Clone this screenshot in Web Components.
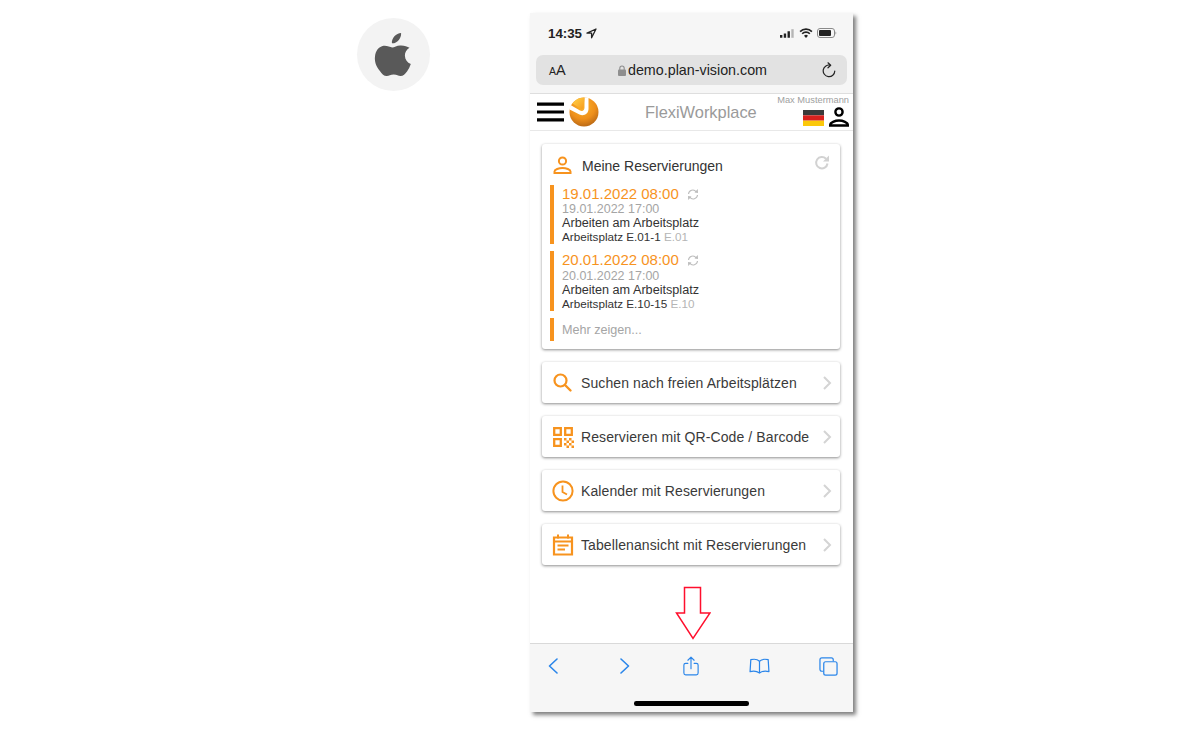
<!DOCTYPE html>
<html lang="de">
<head>
<meta charset="utf-8">
<title>FlexiWorkplace</title>
<style>
    html, body { margin: 0; height: 100%; background: #fff; }
    body {
        font-family: "Liberation Sans", Arial, sans-serif;
        display: flex;
        align-items: flex-start;
        padding: 13px 0 0 357px;
        box-sizing: border-box;
        overflow: hidden;
    }
</style>
</head>
<body>
<os-badge></os-badge>
<phone-frame>
    <safari-top slot="top"></safari-top>
    <app-header slot="top"></app-header>
    <reservation-card>
        <reservation-item from="19.01.2022 08:00" to="19.01.2022 17:00" place="Arbeitsplatz E.01-1" room="E.01"></reservation-item>
        <reservation-item from="20.01.2022 08:00" to="20.01.2022 17:00" place="Arbeitsplatz E.10-15" room="E.10"></reservation-item>
    </reservation-card>
    <menu-card icon="search">Suchen nach freien Arbeitsplätzen</menu-card>
    <menu-card icon="qr">Reservieren mit QR-Code / Barcode</menu-card>
    <menu-card icon="clock">Kalender mit Reservierungen</menu-card>
    <menu-card icon="table">Tabellenansicht mit Reservierungen</menu-card>
    <safari-bottom slot="bottom"></safari-bottom>
</phone-frame>

<script>
class OsBadge extends HTMLElement {
    constructor() {
        super();
        this.attachShadow({mode: 'open'});
        this.shadowRoot.innerHTML = `
            <style>
                :host {
                    display: flex;
                    flex: none;
                    width: 73px;
                    height: 73px;
                    margin: 5px 100px 0 0;
                    border-radius: 50%;
                    background: #f3f3f3;
                    align-items: center;
                    justify-content: center;
                }
                svg { width: 38px; height: 45px; margin-top: -1px; margin-left: -2px; }
            </style>
            <svg viewBox="0 0 37 45"><path fill="#595959" d="M26.600 1c.2 3-.9 5.400-2.500 7.200-1.700 2-4.200 3.300-6.700 3.100-.3-2.800 1-5.400 2.500-7.100C21.600 2.400 24.300 1.100 26.600 1zM35 15.800c-3 1.900-4.700 4.500-4.600 7.900.1 3.900 2.400 6.700 5.900 8.300-.9 2.700-2.200 5.200-3.800 7.400-1.900 2.600-3.800 4.700-6.400 4.700-2.500 0-3.500-1.500-6.900-1.500-3.300 0-4.600 1.500-6.900 1.500-2.700.1-4.900-2.400-6.900-5.200C1.600 34.700-.2 29.300.5 24.200c.6-4.600 3-8.700 7.500-10.100 3.900-1.200 7.100 1.300 9.700 1.300 2.400 0 5.100-2.400 9-1.900 3.300.2 6.300 1 8.300 2.300z"/></svg>
        `;
    }
}

class PhoneFrame extends HTMLElement {
    constructor() {
        super();
        this.attachShadow({mode: 'open'});
        this.shadowRoot.innerHTML = `
            <style>
                :host {
                    display: flex;
                    flex-direction: column;
                    flex: none;
                    width: 323px;
                    height: 699px;
                    background: #fff;
                    position: relative;
                    box-shadow: 3px 3px 4px rgba(0,0,0,.5);
                }
                main {
                    flex: 1;
                    display: flex;
                    flex-direction: column;
                    gap: 13px;
                    padding: 13px 13px 0 12px;
                    min-height: 0;
                }
                svg {
                    position: absolute;
                    left: 145px;
                    top: 573px;
                    width: 36px;
                    height: 54px;
                }
            </style>
            <slot name="top"></slot>
            <main><slot></slot></main>
            <slot name="bottom"></slot>
            <svg viewBox="0 0 36 54"><path fill="#fff" stroke="#ff0f2d" stroke-width="1.500" d="M9.500 1.500h16V27h9.500L18 52.500 1.500 27h8z"/></svg>
        `;
    }
}

class SafariTop extends HTMLElement {
    constructor() {
        super();
        this.attachShadow({mode: 'open'});
        this.shadowRoot.innerHTML = `
            <style>
                :host {
                    display: block;
                    height: 80px;
                    background: #f6f6f6;
                    border-bottom: 1px solid #dedede;
                }
                .status {
                    display: flex;
                    align-items: center;
                    height: 28px;
                    padding: 6px 16px 0 18px;
                    font-size: 13.300px;
                    font-weight: 700;
                    color: #222;
                    gap: 4px;
                }
                .status .icons { margin-left: auto; display: flex; align-items: center; gap: 5px; }
                .url {
                    display: flex;
                    align-items: center;
                    height: 30px;
                    margin: 8px 6px 0;
                    padding: 0 12px;
                    border-radius: 7px;
                    background: #e2e2e2;
                    color: #222;
                }
                .aa { font-size: 14.500px; width: 52px; padding-left: 1px; box-sizing: border-box; }
                .aa small { font-size: 10.500px; }
                .host { flex: 1; display: flex; align-items: center; justify-content: center; gap: 2px; font-size: 14.300px; margin-left: 3px; }
            </style>
            <div class="status">
                <span>14:35</span>
                <svg width="11" height="11" viewBox="0 0 11 11"><path fill="none" stroke="#222" stroke-width="1.300" stroke-linejoin="round" d="M10 1 1 5.200h4.600V9.800z"/></svg>
                <span class="icons">
                    <svg width="14" height="9" viewBox="0 0 13 8" style="margin-left:-1px"><path fill="#222" d="M0 5.500h2.200V8H0zM3.500 4h2.200v4H3.500zM7 2h2.200v6H7z"/><path fill="#b5b5b5" d="M10.500 0h2.200v8h-2.200z"/></svg>
                    <svg width="14" height="10" viewBox="0 0 15 11"><path fill="none" stroke="#222" stroke-width="1.800" d="M1 4a9 9 0 0 1 13 0M3.300 6.300a5.800 5.800 0 0 1 8.400 0"/><path fill="#222" d="M7.500 11 5.300 8.600a3.200 3.200 0 0 1 4.400 0z"/></svg>
                    <svg width="20" height="10" viewBox="0 0 20 10" style="margin-left:-1px"><rect x=".5" y=".5" width="17" height="9" rx="2.500" fill="none" stroke="#8a8a8a"/><rect x="2" y="2" width="12" height="6" rx="1" fill="#222"/><path fill="#8a8a8a" d="M18.500 3.500c1 .3 1 2.700 0 3z"/></svg>
                </span>
            </div>
            <div class="url">
                <span class="aa"><small>A</small>A</span>
                <span class="host">
                    <svg width="8" height="11" viewBox="0 0 8 11"><path fill="none" stroke="#8e8e8e" stroke-width="1.100" d="M1.800 5V3.200a2.200 2.200 0 0 1 4.400 0V5"/><rect y="4.500" width="8" height="6.500" rx="1" fill="#8e8e8e"/></svg>
                    demo.plan-vision.com
                </span>
                <svg width="14" height="16" viewBox="0 0 14 16" style="margin-left:40px;margin-right:-1px"><path fill="none" stroke="#222" stroke-width="1.200" stroke-linecap="round" stroke-linejoin="round" d="M8.500 3.200A5.800 5.800 0 1 0 12.800 9M6 .8l2.700 2.400L6 5.800"/></svg>
            </div>
        `;
    }
}

class AppHeader extends HTMLElement {
    constructor() {
        super();
        this.attachShadow({mode: 'open'});
        this.shadowRoot.innerHTML = `
            <style>
                :host {
                    display: flex;
                    align-items: center;
                    height: 36px;
                    padding: 0 4px 0 7px;
                    border-bottom: 1px solid #e8e8e8;
                    position: relative;
                }
                .burger { width: 27px; height: 20px; flex: none; }
                .logo { width: 30px; height: 30px; flex: none; margin-left: 5px; margin-top: -1px; }
                h1 {
                    flex: 1;
                    margin: 0 0 0 46px;
                    font-size: 16.400px;
                    font-weight: 400;
                    color: #9a9a9a;
                }
                .user { display: flex; flex-direction: column; align-items: flex-end; align-self: stretch; }
                .name { font-size: 9.300px; line-height: 10px; margin-top: 1px; color: #a0a0a0; white-space: nowrap; }
                .icons { display: flex; align-items: flex-end; gap: 5px; margin-top: 2px; }
                .flag { margin-bottom: 1px; }
            </style>
            <svg class="burger" viewBox="0 0 27 20"><path fill="#000" d="M0 .5h27v3.200H0zM0 8.400h27v3.200H0zM0 16.300h27v3.200H0z"/></svg>
            <svg class="logo" viewBox="0 0 30 30">
                <defs>
                    <radialGradient id="g" cx=".45" cy=".3" r=".8"><stop offset="0" stop-color="#fbb42a"/><stop offset=".55" stop-color="#ee8f1b"/><stop offset="1" stop-color="#a85c14"/></radialGradient>
                    <linearGradient id="y" x1="0" y1="0" x2="1" y2="1"><stop offset="0" stop-color="#ffd44a"/><stop offset="1" stop-color="#f79a1c"/></linearGradient>
                </defs>
                <circle cx="15" cy="15" r="14.500" fill="url(#g)"/>
                <path fill="#fff" d="M1.500 8 11 13.500c2.500 1.200 4.500-.2 4.500-3V.5h4V12c0 5-5 7.500-9 5.500L.6 12.500z"/>
                <path fill="url(#y)" d="M15.500.5A14.500 14.500 0 0 0 3.500 6.500l8.300 5.300c1.200.6 2.700-.2 2.700-1.200z"/>
            </svg>
            <h1>FlexiWorkplace</h1>
            <div class="user">
                <div class="name">Max Mustermann</div>
                <div class="icons">
                    <svg class="flag" width="21" height="16" viewBox="0 0 21 15" preserveAspectRatio="none"><path fill="#3a3a3a" d="M0 0h21v5H0z"/><path fill="#d8211e" d="M0 5h21v5H0z"/><path fill="#fbc80a" d="M0 10h21v5H0z"/></svg>
                    <svg width="20" height="20" viewBox="0 0 20 20"><circle cx="10" cy="5" r="3.600" fill="none" stroke="#000" stroke-width="2.400"/><path fill="none" stroke="#000" stroke-width="2.400" d="M1.200 18.500v-.7c0-2.300 4.800-4.300 8.800-4.300s8.800 2 8.800 4.300v.7z"/></svg>
                </div>
            </div>
        `;
    }
}

class ReservationCard extends HTMLElement {
    constructor() {
        super();
        this.attachShadow({mode: 'open'});
        this.shadowRoot.innerHTML = `
            <style>
                :host {
                    display: flex;
                    flex-direction: column;
                    gap: 7px;
                    height: 205px;
                    box-sizing: border-box;
                    padding: 0 0 0 8px;
                    background: #fff;
                    border-radius: 3px;
                    box-shadow: 0 1px 3px rgba(0,0,0,.45);
                    color: #333;
                    position: relative;
                }
                header {
                    display: flex;
                    align-items: center;
                    height: 39px;
                    margin-bottom: -7px;
                    padding-top: 2px;
                    font-size: 14px;
                }
                header .person { margin: 0 9px 0 2px; }
                .refresh { position: absolute; right: 10px; top: 11px; }
                .more {
                    border-left: 4px solid #f7931e;
                    height: 23px;
                    margin-top: .4px;
                    padding-left: 8px;
                    font-size: 12.600px;
                    line-height: 24px;
                    color: #a5a5a5;
                }
            </style>
            <header>
                <svg class="person" width="21" height="21" viewBox="0 0 21 21"><circle cx="10.500" cy="6" r="3.600" fill="none" stroke="#f7931e" stroke-width="2"/><path fill="none" stroke="#f7931e" stroke-width="2" d="M2.500 18v-1.500c0-2 4.400-3.500 8-3.500s8 1.500 8 3.500V18z"/></svg>
                Meine Reservierungen
            </header>
            <svg class="refresh" width="16" height="16" viewBox="0 0 16 16"><path fill="none" stroke="#d2d2d2" stroke-width="2" d="M13.500 8.500A5.700 5.700 0 1 1 12 3.800"/><path fill="#d2d2d2" d="M15 .5v6H9z"/></svg>
            <slot></slot>
            <div class="more">Mehr zeigen...</div>
        `;
    }
}

class ReservationItem extends HTMLElement {
    constructor() {
        super();
        this.attachShadow({mode: 'open'});
        this.shadowRoot.innerHTML = `
            <style>
                :host {
                    display: block;
                    height: 59.300px;
                    border-left: 4px solid #f7931e;
                    padding-left: 8px;
                    color: #333;
                    font-size: 12.650px;
                    line-height: 14px;
                }
                .from { display: flex; align-items: center; gap: 8px; color: #f7931e; font-size: 15px; line-height: 18.400px; }
                .to { color: #a5a5a5; font-size: 12.500px; line-height: 13px; }
                .what, .where { line-height: 14px; white-space: nowrap; }
                .where { font-size: 11.700px; }
                .room { color: #b5b5b5; }
            </style>
            <div class="from"><span class="f"></span>
                <svg width="12" height="11" viewBox="0 0 12 11"><path fill="none" stroke="#bdbdbd" stroke-width="1.100" d="M1.500 5A4.300 4.300 0 0 1 9.200 2.800M10.500 6A4.300 4.300 0 0 1 2.800 8.200"/><path fill="#bdbdbd" d="m10.800 0 .2 4-3.500-.6zM1.200 11 1 7l3.500.6z"/></svg>
            </div>
            <div class="to"></div>
            <div class="what">Arbeiten am Arbeitsplatz</div>
            <div class="where"><span class="p"></span> <span class="room"></span></div>
        `;
    }
    connectedCallback() {
        const root = this.shadowRoot;
        root.querySelector('.f').textContent = this.getAttribute('from');
        root.querySelector('.to').textContent = this.getAttribute('to');
        root.querySelector('.p').textContent = this.getAttribute('place');
        root.querySelector('.room').textContent = this.getAttribute('room');
    }
}

const MENU_ICONS = {
    search: `<circle cx="8.500" cy="8.500" r="6" fill="none" stroke="#f7931e" stroke-width="2.200"/><path stroke="#f7931e" stroke-width="2.400" stroke-linecap="round" d="m13.500 13.500 5 5"/>`,
    qr: `<path fill="none" stroke="#f7931e" stroke-width="2.300" d="M2.200 2.200h6.600v6.600H2.200zM13.200 2.200h6.600v6.600h-6.600zM2.200 13.200h6.600v6.600H2.200z"/><path fill="#f7931e" d="M12 12h2.500v2.500H12zM17 12h2.500v2.500H17zM14.500 14.500H17V17h-2.500zM19.500 14.500H22V17h-2.500zM12 17h2.500v2.500H12zM17 17h2.500v2.500H17zM14.500 19.500H17V22h-2.500zM19.500 19.500H22V22h-2.500z"/>`,
    clock: `<circle cx="11" cy="11" r="9.600" fill="none" stroke="#f7931e" stroke-width="2"/><path fill="none" stroke="#f7931e" stroke-width="1.800" d="M10.500 5.500V12l4.500 2.500"/>`,
    table: `<path fill="none" stroke="#f7931e" stroke-width="2.200" d="M2 3.500h18v17H2zM2 7.500h18"/><path stroke="#f7931e" stroke-width="2" d="M6 .5v4M16 .5v4"/><path fill="#f7931e" d="M5.500 10.500h11v2h-11zM5.500 14.500h7.500v2H5.500z"/>`
};

class MenuCard extends HTMLElement {
    constructor() {
        super();
        this.attachShadow({mode: 'open'});
        this.shadowRoot.innerHTML = `
            <style>
                :host {
                    display: flex;
                    align-items: center;
                    height: 41px;
                    flex: none;
                    padding: 0 8px 0 10px;
                    background: #fff;
                    border-radius: 3px;
                    box-shadow: 0 1px 3px rgba(0,0,0,.45);
                    color: #3a3a3a;
                    font-size: 14px;
                }
                .icon { width: 22px; height: 22px; flex: none; margin-right: 7px; }
                .label { flex: 1; white-space: nowrap; letter-spacing: .1px; }
                .chev { flex: none; }
            </style>
            <svg class="icon" viewBox="0 0 22 22"></svg>
            <span class="label"><slot></slot></span>
            <svg class="chev" width="10" height="14" viewBox="0 0 10 14"><path fill="none" stroke="#d4d4d4" stroke-width="2" d="m2 1 6 6-6 6"/></svg>
        `;
    }
    connectedCallback() {
        this.shadowRoot.querySelector('.icon').innerHTML = MENU_ICONS[this.getAttribute('icon')];
    }
}

class SafariBottom extends HTMLElement {
    constructor() {
        super();
        this.attachShadow({mode: 'open'});
        this.shadowRoot.innerHTML = `
            <style>
                :host {
                    display: flex;
                    flex-direction: column;
                    align-items: center;
                    height: 69px;
                    background: #f6f6f6;
                    border-top: 1px solid #d9d9d9;
                    box-sizing: border-box;
                }
                .tools {
                    display: flex;
                    align-items: center;
                    justify-content: space-between;
                    align-self: stretch;
                    height: 44px;
                    padding: 0 16px 0 14.500px;
                }
                .tools span { display: flex; justify-content: center; width: 18px; }
                .tools svg { flex: none; }
                .home { width: 115px; height: 4.500px; margin-top: 13px; border-radius: 2.250px; background: #000; }
                path, rect { fill: none; stroke: #2b86ea; stroke-width: 1.300; stroke-linecap: round; stroke-linejoin: round; }
                .chev { stroke-width: 1.600; }
            </style>
            <div class="tools">
                <span><svg width="10" height="16" viewBox="0 0 10 16" style="margin-right:2px"><path class="chev" d="M9 1 1.500 8 9 15"/></svg></span>
                <span><svg width="10" height="16" viewBox="0 0 10 16" style="margin-left:6px"><path class="chev" d="M1 1l7.500 7L1 15"/></svg></span>
                <span><svg width="16" height="20" viewBox="0 0 18 22"><path d="M5.500 8H3a2 2 0 0 0-2 2v9a2 2 0 0 0 2 2h12a2 2 0 0 0 2-2v-9a2 2 0 0 0-2-2h-2.500M9 14V1M5.500 4.500 9 1l3.500 3.500"/></svg></span>
                <span><svg width="21" height="17" viewBox="0 0 22 18"><path d="M11 3.500C9 1.500 5 1 1.800 1.800L1 14.500c3.500-1 7-.8 10 1.500 3-2.300 6.500-2.500 10-1.500l-.8-12.700C17 1 13 1.500 11 3.500zM11 3.500V16"/></svg></span>
                <span><svg width="19" height="19" viewBox="0 0 20 20"><path d="M4 15H3a2 2 0 0 1-2-2V3a2 2 0 0 1 2-2h10a2 2 0 0 1 2 2v1"/><rect x="5" y="5" width="14" height="14" rx="2"/></svg></span>
            </div>
            <div class="home"></div>
        `;
    }
}

customElements.define('os-badge', OsBadge);
customElements.define('phone-frame', PhoneFrame);
customElements.define('safari-top', SafariTop);
customElements.define('app-header', AppHeader);
customElements.define('reservation-card', ReservationCard);
customElements.define('reservation-item', ReservationItem);
customElements.define('menu-card', MenuCard);
customElements.define('safari-bottom', SafariBottom);
</script>
</body>
</html>
